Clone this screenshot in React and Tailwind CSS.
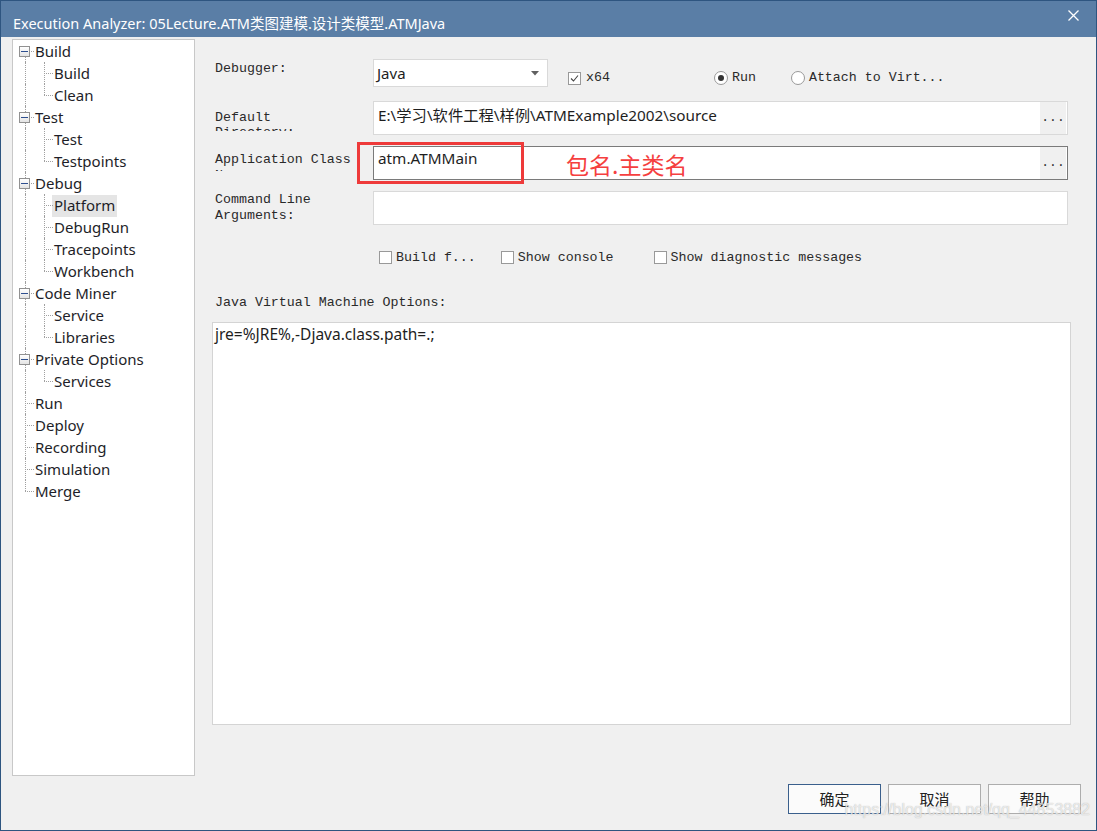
import React from "react";

const tree = [
	{ label: "Build", children: ["Build", "Clean"] },
	{ label: "Test", children: ["Test", "Testpoints"] },
	{ label: "Debug", children: ["Platform", "DebugRun", "Tracepoints", "Workbench"] },
	{ label: "Code Miner", children: ["Service", "Libraries"] },
	{ label: "Private Options", children: ["Services"] },
	{ label: "Run" },
	{ label: "Deploy" },
	{ label: "Recording" },
	{ label: "Simulation" },
	{ label: "Merge" },
];

function Minus() {
	return (
		<span className="absolute left-[5px] top-[6px] w-[11px] h-[11px] border border-[#919191] bg-gradient-to-b from-white to-[#e4e4e4] flex items-center justify-center">
			<span className="block w-[7px] h-[1px] bg-[#2e4f8f]" />
		</span>
	);
}

function TreeRow({ text, first, last, hasKids, child, childLast, selected }) {
	return (
		<div className="relative h-[22px]">
			{/* top level vertical line */}
			<span
				className={
					"absolute left-[11px] border-l border-dotted border-[#a0a0a0] " +
					(first ? "top-[11px] " : "top-0 ") +
					(last ? "h-[11px]" : "bottom-0")
				}
			/>
			{child ? (
				<>
					<span
						className={
							"absolute left-[30px] top-0 border-l border-dotted border-[#a0a0a0] " +
							(childLast ? "h-[11px]" : "bottom-0")
						}
					/>
					<span className="absolute left-[30px] top-[11px] w-[9px] border-t border-dotted border-[#a0a0a0]" />
				</>
			) : (
				<span className="absolute left-[11px] top-[11px] w-[9px] border-t border-dotted border-[#a0a0a0]" />
			)}
			{hasKids && <Minus />}
			<div className={child ? "pl-[38px]" : "pl-[19px]"}>
				<span
					className={
						"inline-block px-[2px] leading-[22px] text-[15px] text-[#1e1e28] " +
						(selected ? "bg-[#e5e5e5]" : "")
					}
				>
					<span className="relative top-[-1px]">{text}</span>
				</span>
			</div>
		</div>
	);
}

function Tree() {
	const rows = [];
	tree.forEach((node, i) => {
		rows.push(
			<TreeRow
				key={node.label + i}
				text={node.label}
				first={i === 0}
				last={i === tree.length - 1}
				hasKids={!!node.children}
			/>
		);
		(node.children || []).forEach((c, j) => {
			rows.push(
				<TreeRow
					key={node.label + c}
					text={c}
					child
					childLast={j === node.children.length - 1}
					selected={c === "Platform"}
				/>
			);
		});
	});
	return (
		<div className="ml-[11px] mt-[2px] w-[183px] h-[737px] bg-white border border-[#c8c8c8] pl-[1px]">
			{rows}
		</div>
	);
}

function Check({ checked }) {
	return (
		<span className="w-[13px] h-[13px] border border-[#999999] bg-white flex items-center justify-center">
			{checked && (
				<svg width="9" height="9" viewBox="0 0 9 9">
					<path d="M1 4.5 L3.5 7 L8 1.5" fill="none" stroke="#444" strokeWidth="1.1" />
				</svg>
			)}
		</span>
	);
}

function Radio({ checked }) {
	return (
		<span className="w-[14px] h-[14px] rounded-full border border-[#999999] bg-white flex items-center justify-center">
			{checked && <span className="w-[6px] h-[6px] rounded-full bg-[#333333]" />}
		</span>
	);
}

function Dots() {
	return (
		<div className="w-[26px] h-[32px] mr-[1px] bg-[#f0f0f0] flex items-end justify-center pb-[7px] font-['Liberation_Mono',monospace] text-[13px] text-[#333]">
			...
		</div>
	);
}

export default function App() {
	const mono = "font-['Liberation_Mono',monospace] text-[13.3px] text-[#2a2a2a]";
	return (
		<div className="w-[1097px] h-[831px] border border-[#2e5580] flex flex-col bg-[#f0f0f0] font-['Noto_Sans','Noto_Sans_CJK_SC',sans-serif] overflow-hidden">
			{/* title bar */}
			<div className="h-[36px] bg-[#5a7ea6] flex items-start shrink-0">
				<div className="pl-[12px] pt-[12px] text-[14.5px] leading-[20px] text-white">
					Execution Analyzer: 05Lecture.ATM类图建模.设计类模型.ATMJava
				</div>
				<div className="ml-auto mr-[17px] mt-[9px]">
					<svg width="11" height="11" viewBox="0 0 11 11">
						<path d="M0.5 0.5 L10.5 10.5 M10.5 0.5 L0.5 10.5" stroke="white" strokeWidth="1.3" />
					</svg>
				</div>
			</div>

			<div className="flex">
				<Tree />

				{/* right pane */}
				<div className="ml-[17px] mt-[2px] w-[859px] flex flex-col">
					{/* Debugger */}
					<div className="mt-[20px] flex h-[28px]">
						<div className={"w-[161px] pl-[3px] pt-[2px] leading-[16px] " + mono}>Debugger:</div>
						<div className="w-[175px] h-[28px] bg-white border border-[#d9d9d9] flex items-center pl-[3px] pr-[8px] text-[15px] text-[#1e1e1e]">
							<span>Java</span>
							<svg className="ml-auto" width="8" height="5" viewBox="0 0 8 5">
								<path d="M0 0 H8 L4 4.5 Z" fill="#606060" />
							</svg>
						</div>
						<div className="ml-[20px] mt-[12px] flex items-center gap-[5px] h-[14px]">
							<Check checked />
							<span className={mono}>x64</span>
						</div>
						<div className="ml-[104px] mt-[12px] flex items-center gap-[4px] h-[14px]">
							<Radio checked />
							<span className={mono}>Run</span>
						</div>
						<div className="ml-[35px] mt-[12px] flex items-center gap-[4px] h-[14px]">
							<Radio />
							<span className={mono}>Attach to Virt...</span>
						</div>
					</div>

					{/* Default Directory */}
					<div className="mt-[14px] flex h-[34px]">
						<div className={"w-[161px] pl-[3px] mt-[9px] h-[21px] overflow-hidden leading-[15px] " + mono}>
							Default
							<br />
							Directory:
						</div>
						<div className="w-[695px] h-[34px] bg-white border border-[#d9d9d9] flex">
							<div className="flex-1 pl-[4px] pt-[3px] text-[15.3px] leading-[20px] text-[#1e1e1e]">
								E:\学习\软件工程\样例\ATMExample2002\source
							</div>
							<Dots />
						</div>
					</div>

					{/* Application Class */}
					<div className="mt-[11px] flex h-[34px]">
						<div className={"w-[161px] pl-[3px] mt-[6px] h-[19px] overflow-hidden leading-[16px] " + mono}>
							Application Class
							<br />
							Name:
						</div>
						<div className="relative w-[695px] h-[34px] bg-white border border-[#7a7a7a] flex">
							<div className="flex-1 pl-[4px] pt-[1px] text-[15.3px] leading-[20px] text-[#1e1e1e]">
								atm.ATMMain
							</div>
							<Dots />
							<div className="absolute left-[-17px] top-[-5px] w-[167px] h-[42px] border-[3px] border-[#ee3a3a]" />
							<div className="absolute left-[192px] top-[2px] text-[23px] leading-[30px] text-[#f53f3f] font-['Noto_Sans_CJK_SC',sans-serif]">
								包名.主类名
							</div>
						</div>
					</div>

					{/* Command line */}
					<div className="mt-[11px] flex h-[34px]">
						<div className={"w-[161px] pl-[3px] pt-[1px] leading-[16px] " + mono}>
							Command Line
							<br />
							Arguments:
						</div>
						<div className="w-[695px] h-[34px] bg-white border border-[#d9d9d9]" />
					</div>

					{/* checkboxes */}
					<div className="mt-[25px] h-[15px] flex items-center pl-[167px]">
						<div className="flex items-center gap-[4px]">
							<Check />
							<span className={mono}>Build f...</span>
						</div>
						<div className="ml-[25px] flex items-center gap-[4px]">
							<Check />
							<span className={mono}>Show console</span>
						</div>
						<div className="ml-[40px] flex items-center gap-[4px]">
							<Check />
							<span className={mono}>Show diagnostic messages</span>
						</div>
					</div>

					<div className={"mt-[30px] pl-[3px] leading-[16px] " + mono}>Java Virtual Machine Options:</div>

					<div className="mt-[11px] w-[859px] h-[403px] bg-white border border-[#d4d4d4] pl-[2px] text-[15.5px] leading-[22px] text-[#1e1e1e]">
						jre=%JRE%,-Djava.class.path=.;
					</div>
				</div>
			</div>

			{/* buttons */}
			<div className="relative mt-[8px] flex justify-end gap-[7px] pr-[15px]">
				<button className="w-[93px] h-[30px] border border-[#3a5f8c] bg-[#fbfbfb] text-[15px] text-[#222]">确定</button>
				<button className="w-[93px] h-[30px] border border-[#adadad] bg-[#fbfbfb] text-[15px] text-[#222]">取消</button>
				<button className="w-[93px] h-[30px] border border-[#adadad] bg-[#fbfbfb] text-[15px] text-[#222]">帮助</button>
				<div className="absolute right-[6px] top-[16px] font-['Liberation_Sans',sans-serif] text-[16px] leading-[20px] text-white/70 [text-shadow:0_0_1px_rgba(120,120,120,0.6)]">
					https://blog.csdn.net/qq_44853882
				</div>
			</div>
		</div>
	);
}
